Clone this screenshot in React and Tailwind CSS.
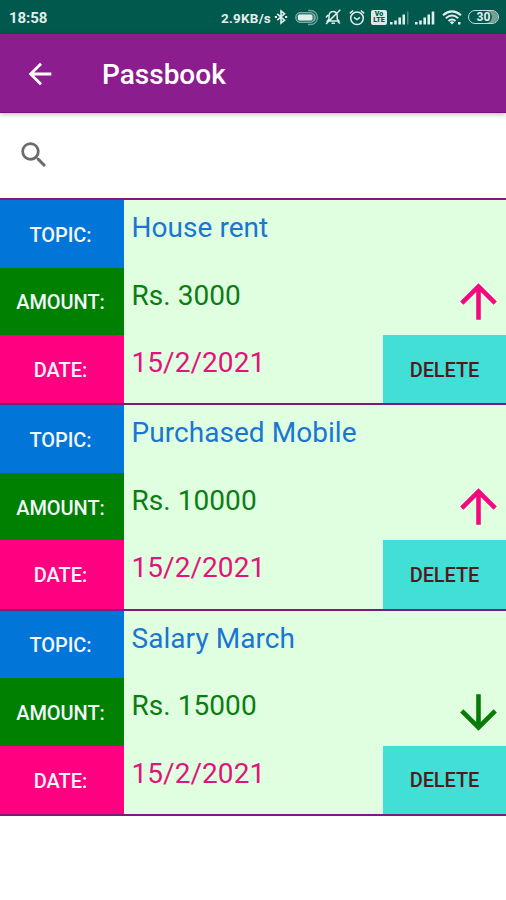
const entries = [
  { topic: "House rent", amount: "Rs. 3000", date: "15/2/2021", out: true },
  { topic: "Purchased Mobile", amount: "Rs. 10000", date: "15/2/2021", out: true },
  { topic: "Salary March", amount: "Rs. 15000", date: "15/2/2021", out: false },
];

function StatusBar() {
  return (
    <div className="flex h-[34px] shrink-0 items-center bg-[#00594c] pl-[9px] pr-[7px] text-[#e0efec]">
      <span className="pt-[2px] text-[15px] font-bold leading-[32px] tracking-[-0.1px]">18:58</span>
      <span className="ml-auto pt-[2px] text-[13.500px] font-bold leading-[32px] tracking-[0.2px]">2.9KB/s</span>
      {/* bluetooth */}
      <svg className="ml-[3px] h-4 w-[14px]" viewBox="0 0 14 16" fill="none" stroke="currentColor" strokeWidth="1.6">
        <path d="M3.200 4.800l7.300 6.400L7 14V2l3.500 2.800-7.300 6.400" />
        <path d="M0.800 8h2.200M11 8h2.200" strokeWidth="2" />
      </svg>
      {/* headset battery */}
      <svg className="ml-[7px] h-[17px] w-6" viewBox="0 0 24 17" fill="none" stroke="currentColor">
        <rect x="0.700" y="3.500" width="19" height="10" rx="4.500" fill="currentColor" fillOpacity=".25" strokeOpacity=".5" />
        <path d="M13 1.500h2.500a7 7 0 010 14H13" opacity=".5" strokeWidth="1.300" />
        <path d="M18.500 4.500a5 5 0 010 8" opacity=".5" />
        <rect x="3.500" y="6" width="13.500" height="5" rx="1" fill="currentColor" />
      </svg>
      {/* muted bell */}
      <svg className="ml-[6px] h-4 w-4" viewBox="0 0 16 16" fill="none" stroke="currentColor" strokeWidth="1.500">
        <path d="M2.500 12h11.300l-1.600-2V6.500A4 4 0 008 2.500a4 4 0 00-4 4V10zM6.500 14.300h3.500M15.300 .800L1 15M1 8.500L3 6M13 13l2 1.500" />
      </svg>
      {/* alarm */}
      <svg className="ml-[8px] h-[17px] w-4" viewBox="0 0 16 17" fill="none" stroke="currentColor" strokeWidth="1.500">
        <circle cx="8" cy="9.300" r="6.300" />
        <path d="M.800 4.300l3.400-2.800M15.200 4.300l-3.400-2.800M5 8.300l3 2.200 3-2.200" />
      </svg>
      {/* VoLTE */}
      <span className="ml-[6px] flex h-[15px] w-4 flex-col items-center justify-center rounded-[2px] bg-[#dcebe8] text-[7px] font-black leading-[6.500px] text-[#00594c]">
        <span>Vo</span>
        <span>LTE</span>
      </span>
      <svg className="ml-[3px] h-[15px] w-5" viewBox="0 0 20 15" fill="currentColor">
        <path d="M0 12h2.600v2.500H0zM4.200 10.500h2.600v4H4.200zM8.400 7.500H11v7H8.400zM12.500 4.500H15v10h-2.500z" />
        <path d="M17 1.500h1.500v13H17z" opacity=".35" />
      </svg>
      <svg className="ml-[5px] h-[15px] w-5" viewBox="0 0 20 15" fill="currentColor">
        <path d="M0 12h2.600v2.500H0zM4.200 10.500h2.600v4H4.200zM8.400 7.500H11v7H8.400zM12.500 4.500H15v10h-2.500zM16.700 1.500h2.600v13h-2.600z" />
      </svg>
      {/* wifi */}
      <svg className="ml-[7px] h-4 w-5" viewBox="0 0 20 16" fill="none" stroke="currentColor" strokeWidth="2">
        <path d="M1 6.200Q10-1.500 19 6.200M3.800 9.200Q10 3.800 16.200 9.200M6.500 12Q10 9 13.500 12" />
        <path d="M7.800 13.200L10 15.500l2.200-2.300Q10 11.500 7.800 13.200zM16 13h2.500v2.500H16z" fill="currentColor" stroke="none" />
      </svg>
      <span className="ml-[6px] flex h-[14px] w-[31px] items-center justify-center rounded-full border-[1.500px] border-[#c4dcd8] shadow-[inset_5px_0_0_-1px_#00594c,inset_-6px_0_0_#6fa199]">
        <span className="text-[12px] font-bold leading-none">30</span>
      </span>
    </div>
  );
}

function Label({ color, children }) {
  return (
    <div className={`flex items-center justify-center pr-[3px] pt-[2px] text-[20px] font-medium tracking-[-0.05px] text-[#f3f7fb] ${color}`}>
      {children}
    </div>
  );
}

function Entry({ item }) {
  return (
    <li className="flex h-[205.300px] border-b-2 border-[#7c1a7e] bg-[#e0ffe0]">
      <div className="grid w-[124px] grid-rows-[67.5px_67.5px_1fr]">
        <Label color="bg-[#0275d8]">TOPIC:</Label>
        <Label color="bg-[#008000]">AMOUNT:</Label>
        <Label color="bg-[#ff0080]">DATE:</Label>
      </div>
      <div className="grid flex-1 grid-rows-[67.6px_67.4px_1fr] pl-[7.500px] text-[28px] leading-[56px] tracking-[0.05px]">
        <div className="whitespace-nowrap text-[#1976d2]">{item.topic}</div>
        <div className="text-[#0b7d12]">{item.amount}</div>
        <div className="text-[#e0147c]">{item.date}</div>
      </div>
      <div className="grid w-[123px] grid-rows-[135px_1fr]">
        <div className="flex items-end justify-end pb-[6px]">
          <svg className={item.out ? "h-[55px] w-[55px] text-[#f5087f]" : "h-[55px] w-[55px] text-[#087a08]"} viewBox="0 0 24 24" fill="currentColor">
            {item.out ? (
              <path d="M4 12l1.410 1.410L11 7.830V20h2V7.830l5.580 5.590L20 12l-8-8-8 8z" />
            ) : (
              <path d="M20 12l-1.410-1.410L13 16.170V4h-2v12.170l-5.580-5.590L4 12l8 8 8-8z" />
            )}
          </svg>
        </div>
        <button className="bg-[#42dfd7] pt-px text-[20px] font-medium tracking-[-0.1px] text-[#501a1c]">DELETE</button>
      </div>
    </li>
  );
}

export default function App() {
  return (
    <div className="flex h-[900px] w-[506px] flex-col overflow-hidden bg-white font-['Roboto','Liberation_Sans',sans-serif]">
      <StatusBar />
      <header className="relative flex h-[79px] shrink-0 items-center border-b border-[#74127a] bg-[#8c1d8e] pl-[23px] pt-px text-white shadow-[0_1px_5px_rgba(0,0,0,0.3)]">
        <svg className="h-[34px] w-[34px]" viewBox="0 0 24 24" fill="currentColor">
          <path d="M20 11H7.830l5.590-5.590L12 4l-8 8 8 8 1.410-1.410L7.830 13H20v-2z" />
        </svg>
        <h1 className="ml-[45px] pt-[2px] text-[28px] font-medium">Passbook</h1>
      </header>
      <div className="flex h-[85px] shrink-0 items-center pb-[2px] pl-[17px]">
        <svg className="h-[34px] w-[34px] text-[#6b6b6b]" viewBox="0 0 24 24" fill="currentColor">
          <path d="M15.500 14h-.790l-.280-.270A6.471 6.471 0 0016 9.500 6.500 6.500 0 109.500 16c1.610 0 3.090-.590 4.230-1.570l.270.280v.790l5 4.990L20.490 19l-4.990-5zm-6 0C7.010 14 5 11.990 5 9.500S7.010 5 9.500 5 14 7.010 14 9.500 11.990 14 9.500 14z" />
        </svg>
      </div>
      <ul className="border-t-2 border-[#7c1a7e]">
        {entries.map((item) => (
          <Entry key={item.topic} item={item} />
        ))}
      </ul>
    </div>
  );
}
